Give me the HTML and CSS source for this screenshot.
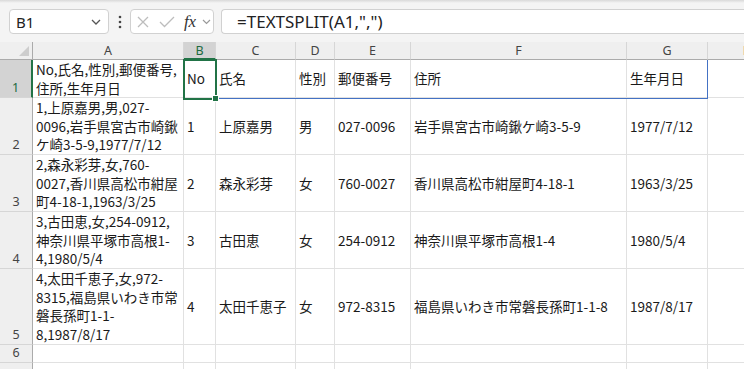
FILE: index.html
```html
<!DOCTYPE html>
<html lang="ja">
<head>
    <meta charset="UTF-8">
    <meta name="viewport" content="width=device-width, initial-scale=1.0">
    <title>TEXTSPLIT</title>
    <link rel="stylesheet" href="styles.css">
</head>
<body>
    <div class="window">
        <div class="toolbar">
            <div class="namebox">
                <span>B1</span>
                <svg class="chev" width="10" height="6" viewBox="0 0 10 6"><path d="M1 1 L5 5 L9 1" fill="none" stroke="#555" stroke-width="1.3"/></svg>
            </div>
            <div class="dots">
                <svg width="4" height="14" viewBox="0 0 4 14"><circle cx="2" cy="2" r="1.3" fill="#444"/><circle cx="2" cy="7" r="1.3" fill="#444"/><circle cx="2" cy="12" r="1.3" fill="#444"/></svg>
            </div>
            <div class="fxbox">
                <svg class="icon-x" width="12" height="12" viewBox="0 0 12 12"><path d="M1 1 L11 11 M11 1 L1 11" stroke="#bdbdbd" stroke-width="1.3"/></svg>
                <svg class="icon-check" width="16" height="12" viewBox="0 0 16 12"><path d="M1 6 L5.5 10.5 L15 1" fill="none" stroke="#bdbdbd" stroke-width="1.3"/></svg>
                <span class="fx">fx</span>
                <svg class="chev small" width="9" height="6" viewBox="0 0 9 6"><path d="M1 1 L4.5 4.5 L8 1" fill="none" stroke="#9a9a9a" stroke-width="1.2"/></svg>
            </div>
            <div class="formula">=TEXTSPLIT(A1,",")</div>
        </div>

        <div class="sheet">
            <div class="corner"></div>
            <div class="colhead">A</div>
            <div class="colhead sel">B</div>
            <div class="colhead">C</div>
            <div class="colhead">D</div>
            <div class="colhead">E</div>
            <div class="colhead">F</div>
            <div class="colhead">G</div>
            <div class="colhead">H</div>

            <div class="rowhead sel">1</div>
            <div class="cell wrap">No,氏名,性別,郵便番号,<br>住所,生年月日</div>
            <div class="cell">No</div>
            <div class="cell">氏名</div>
            <div class="cell">性別</div>
            <div class="cell">郵便番号</div>
            <div class="cell">住所</div>
            <div class="cell">生年月日</div>
            <div class="cell"></div>

            <div class="rowhead">2</div>
            <div class="cell wrap">1,上原嘉男,男,027-<br>0096,岩手県宮古市崎鍬<br>ケ崎3-5-9,1977/7/12</div>
            <div class="cell">1</div>
            <div class="cell">上原嘉男</div>
            <div class="cell">男</div>
            <div class="cell">027-0096</div>
            <div class="cell">岩手県宮古市崎鍬ケ崎3-5-9</div>
            <div class="cell">1977/7/12</div>
            <div class="cell"></div>

            <div class="rowhead">3</div>
            <div class="cell wrap">2,森永彩芽,女,760-<br>0027,香川県高松市紺屋<br>町4-18-1,1963/3/25</div>
            <div class="cell">2</div>
            <div class="cell">森永彩芽</div>
            <div class="cell">女</div>
            <div class="cell">760-0027</div>
            <div class="cell">香川県高松市紺屋町4-18-1</div>
            <div class="cell">1963/3/25</div>
            <div class="cell"></div>

            <div class="rowhead">4</div>
            <div class="cell wrap">3,古田恵,女,254-0912,<br>神奈川県平塚市高根1-<br>4,1980/5/4</div>
            <div class="cell">3</div>
            <div class="cell">古田恵</div>
            <div class="cell">女</div>
            <div class="cell">254-0912</div>
            <div class="cell">神奈川県平塚市高根1-4</div>
            <div class="cell">1980/5/4</div>
            <div class="cell"></div>

            <div class="rowhead">5</div>
            <div class="cell wrap">4,太田千恵子,女,972-<br>8315,福島県いわき市常<br>磐長孫町1-1-<br>8,1987/8/17</div>
            <div class="cell">4</div>
            <div class="cell">太田千恵子</div>
            <div class="cell">女</div>
            <div class="cell">972-8315</div>
            <div class="cell">福島県いわき市常磐長孫町1-1-8</div>
            <div class="cell">1987/8/17</div>
            <div class="cell"></div>

            <div class="rowhead">6</div>
            <div class="cell"></div>
            <div class="cell"></div>
            <div class="cell"></div>
            <div class="cell"></div>
            <div class="cell"></div>
            <div class="cell"></div>
            <div class="cell"></div>
            <div class="cell"></div>

            <!-- row 7 is cut off by the window, its number is not visible -->
            <div class="rowhead"></div>
            <div class="cell"></div>
            <div class="cell"></div>
            <div class="cell"></div>
            <div class="cell"></div>
            <div class="cell"></div>
            <div class="cell"></div>
            <div class="cell"></div>
            <div class="cell"></div>

            <!-- spill range B1:G1 and the active cell -->
            <div class="spill"></div>
            <div class="active"><div class="handle"></div></div>
        </div>
    </div>
</body>
</html>
```

FILE: styles.css
```css
:root {
    --excel-green: #217346;
    --grid-line: #e1e1e1;
    --head-bg: #efefef;
    --head-sel: #d3d3d3;
    --box-border: #d1d1d1;
}

body, html {
    margin: 0;
    background-color: #ffffff;
}

.window {
    width: 744px;
    height: 369px;
    overflow: hidden;
    font-family: "Noto Sans CJK JP", "Noto Sans", sans-serif;
    color: #1a1a1a;
}

/* formula bar */
.toolbar {
    height: 42px;
    box-sizing: border-box;
    padding-top: 9px;
    display: flex;
    align-items: flex-start;
    background: linear-gradient(#d9d9d9, #f4f4f4 3px, #f4f4f4);
}

.namebox {
    margin-left: 9px;
    width: 100px;
    height: 25px;
    box-sizing: border-box;
    background-color: #fff;
    border: 1px solid var(--box-border);
    border-radius: 4px;
    display: flex;
    align-items: center;
    justify-content: space-between;
    padding: 0 7px 0 6px;
    font-family: "Noto Sans", sans-serif;
    font-size: 15px;
    color: #222;
}

.dots {
    width: 21px;
    height: 25px;
    display: flex;
    align-items: center;
    justify-content: center;
}

.fxbox {
    width: 84px;
    height: 25px;
    box-sizing: border-box;
    background-color: #fff;
    border: 1px solid var(--box-border);
    border-radius: 4px;
    display: flex;
    align-items: center;
    padding-left: 6px;
}

.icon-check {
    margin-left: 10px;
}

.fx {
    margin-left: 9px;
    font-family: "Liberation Serif", serif;
    font-style: italic;
    font-size: 17px;
    color: #333;
    letter-spacing: -0.3px;
}

.chev.small {
    margin-left: 6px;
}

.formula {
    margin-left: 7px;
    flex: 1;
    height: 25px;
    box-sizing: border-box;
    background-color: #fff;
    border: 1px solid var(--box-border);
    border-right: none;
    border-radius: 4px 0 0 4px;
    padding-left: 15px;
    font-family: "Noto Sans", sans-serif;
    font-size: 17px;
    line-height: 23px;
    color: #222;
    white-space: nowrap;
}

/* grid */
.sheet {
    position: relative;
    display: grid;
    grid-template-columns: 33px 151px 32px 80px 39px 76px 216px 81px 80px;
    grid-template-rows: 18px 38px 57px 57px 57px 76px 18px 19px;
}

.corner,
.colhead,
.rowhead {
    background-color: var(--head-bg);
    font-family: "Noto Sans", sans-serif;
    font-size: 12.5px;
    color: #444;
    box-sizing: border-box;
    display: flex;
}

.corner {
    position: relative;
    border-right: 1px solid #ababab;
    border-bottom: 1px solid #ababab;
}

.corner::after {
    content: "";
    position: absolute;
    right: 3px;
    bottom: 3px;
    border-left: 10px solid transparent;
    border-bottom: 10px solid #cdcdcd;
}

.colhead {
    justify-content: center;
    align-items: center;
    border-right: 1px solid #d6d6d6;
    border-bottom: 1px solid #ababab;
}

.colhead.sel {
    background-color: var(--head-sel);
    color: #1d6a3f;
    border-bottom: 2px solid var(--excel-green);
}

.rowhead {
    justify-content: center;
    align-items: flex-end;
    line-height: 19px;
    border-right: 1px solid #ababab;
    border-bottom: 1px solid #d6d6d6;
}

.rowhead.sel {
    background-color: var(--head-sel);
    color: #1d6a3f;
    border-right: 2px solid var(--excel-green);
}

.cell {
    box-sizing: border-box;
    border-right: 1px solid var(--grid-line);
    border-bottom: 1px solid var(--grid-line);
    padding-left: 3px;
    display: flex;
    align-items: center;
    font-size: 13.5px;
    line-height: 19px;
    white-space: nowrap;
    overflow: hidden;
}

.cell.wrap {
    display: block;
    line-height: 18.6px;
}

.spill {
    position: absolute;
    left: 184px;
    top: 18px;
    width: 524px;
    height: 39px;
    box-sizing: border-box;
    border-right: 1px solid #4472c4;
    border-bottom: 1px solid #4472c4;
}

.active {
    position: absolute;
    left: 183px;
    top: 17px;
    width: 34px;
    height: 41px;
    box-sizing: border-box;
    border: 2px solid var(--excel-green);
}

.handle {
    position: absolute;
    right: -4px;
    bottom: -4px;
    width: 7px;
    height: 7px;
    box-sizing: border-box;
    background-color: var(--excel-green);
    border: 1px solid #fff;
}
```
